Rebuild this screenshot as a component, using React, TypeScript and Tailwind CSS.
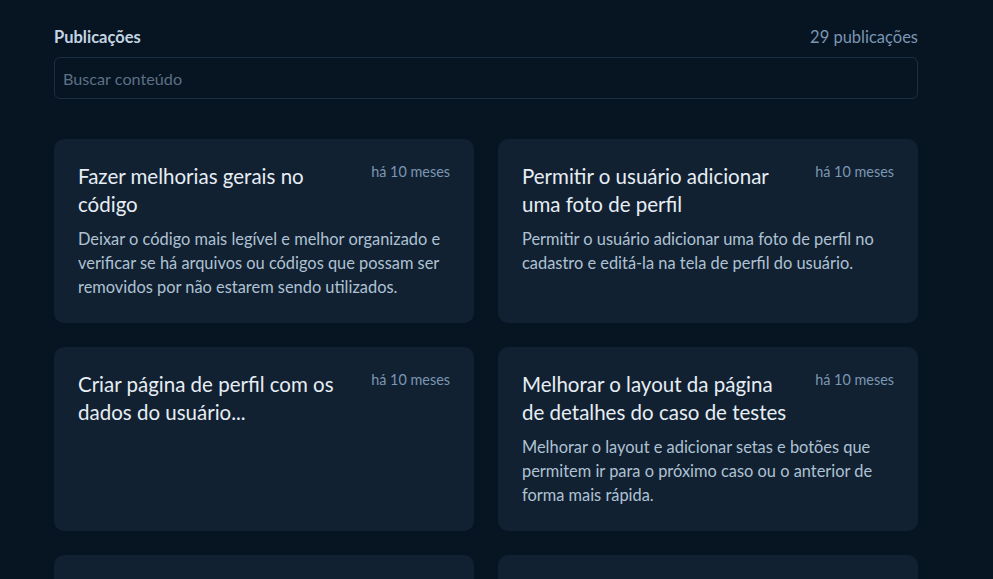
type Post = {
  title: string;
  body?: string;
  date: string;
};

const posts: Post[] = [
  {
    title: "Fazer melhorias gerais no código",
    body: "Deixar o código mais legível e melhor organizado e verificar se há arquivos ou códigos que possam ser removidos por não estarem sendo utilizados.",
    date: "há 10 meses",
  },
  {
    title: "Permitir o usuário adicionar uma foto de perfil",
    body: "Permitir o usuário adicionar uma foto de perfil no cadastro e editá-la na tela de perfil do usuário.",
    date: "há 10 meses",
  },
  {
    title: "Criar página de perfil com os dados do usuário...",
    date: "há 10 meses",
  },
  {
    title: "Melhorar o layout da página de detalhes do caso de testes",
    body: "Melhorar o layout e adicionar setas e botões que permitem ir para o próximo caso ou o anterior de forma mais rápida.",
    date: "há 10 meses",
  },
  { title: "", date: "" },
  { title: "", date: "" },
];

function PostCard({ post }: { post: Post }) {
  return (
    <article className="h-[184px] rounded-[10px] bg-[#112131] px-6 pt-[23px] pb-6">
      <header className="flex items-start justify-between gap-4">
        <h3 className="max-w-[272px] text-[20.5px] leading-[28px] text-[#E7EDF4] line-clamp-2">
          {post.title}
        </h3>
        <span className="shrink-0 text-[14.4px] leading-[20px] text-[#7B96B2]">{post.date}</span>
      </header>
      {post.body && (
        <p className="mt-[9px] text-[16.4px] leading-[24px] text-[#AFC2D4] line-clamp-3">{post.body}</p>
      )}
    </article>
  );
}

export default function App() {
  return (
    <div
      className="min-h-screen bg-[#071422]"
      style={{ fontFamily: "Lato, 'Noto Sans', sans-serif" }}
    >
      <main className="ml-[54px] w-[864px] pt-[25px] pb-16">
        <div className="flex h-6 items-center justify-between">
          <h2 className="text-[16.5px] font-bold text-[#C4D4E3]">Publicações</h2>
          <span className="text-[16.5px] text-[#7B96B2]">29 publicações</span>
        </div>
        <input
          type="text"
          placeholder="Buscar conteúdo"
          className="mt-2 h-[42px] w-full rounded-[6px] border border-[#1C2F41] bg-transparent px-2 text-[16.2px] text-[#C4D4E3] outline-none placeholder:text-[#5C7085]"
        />
        <section className="mt-10 grid grid-cols-2 gap-6">
          {posts.map((p, i) => (
            <PostCard key={i} post={p} />
          ))}
        </section>
      </main>
    </div>
  );
}
